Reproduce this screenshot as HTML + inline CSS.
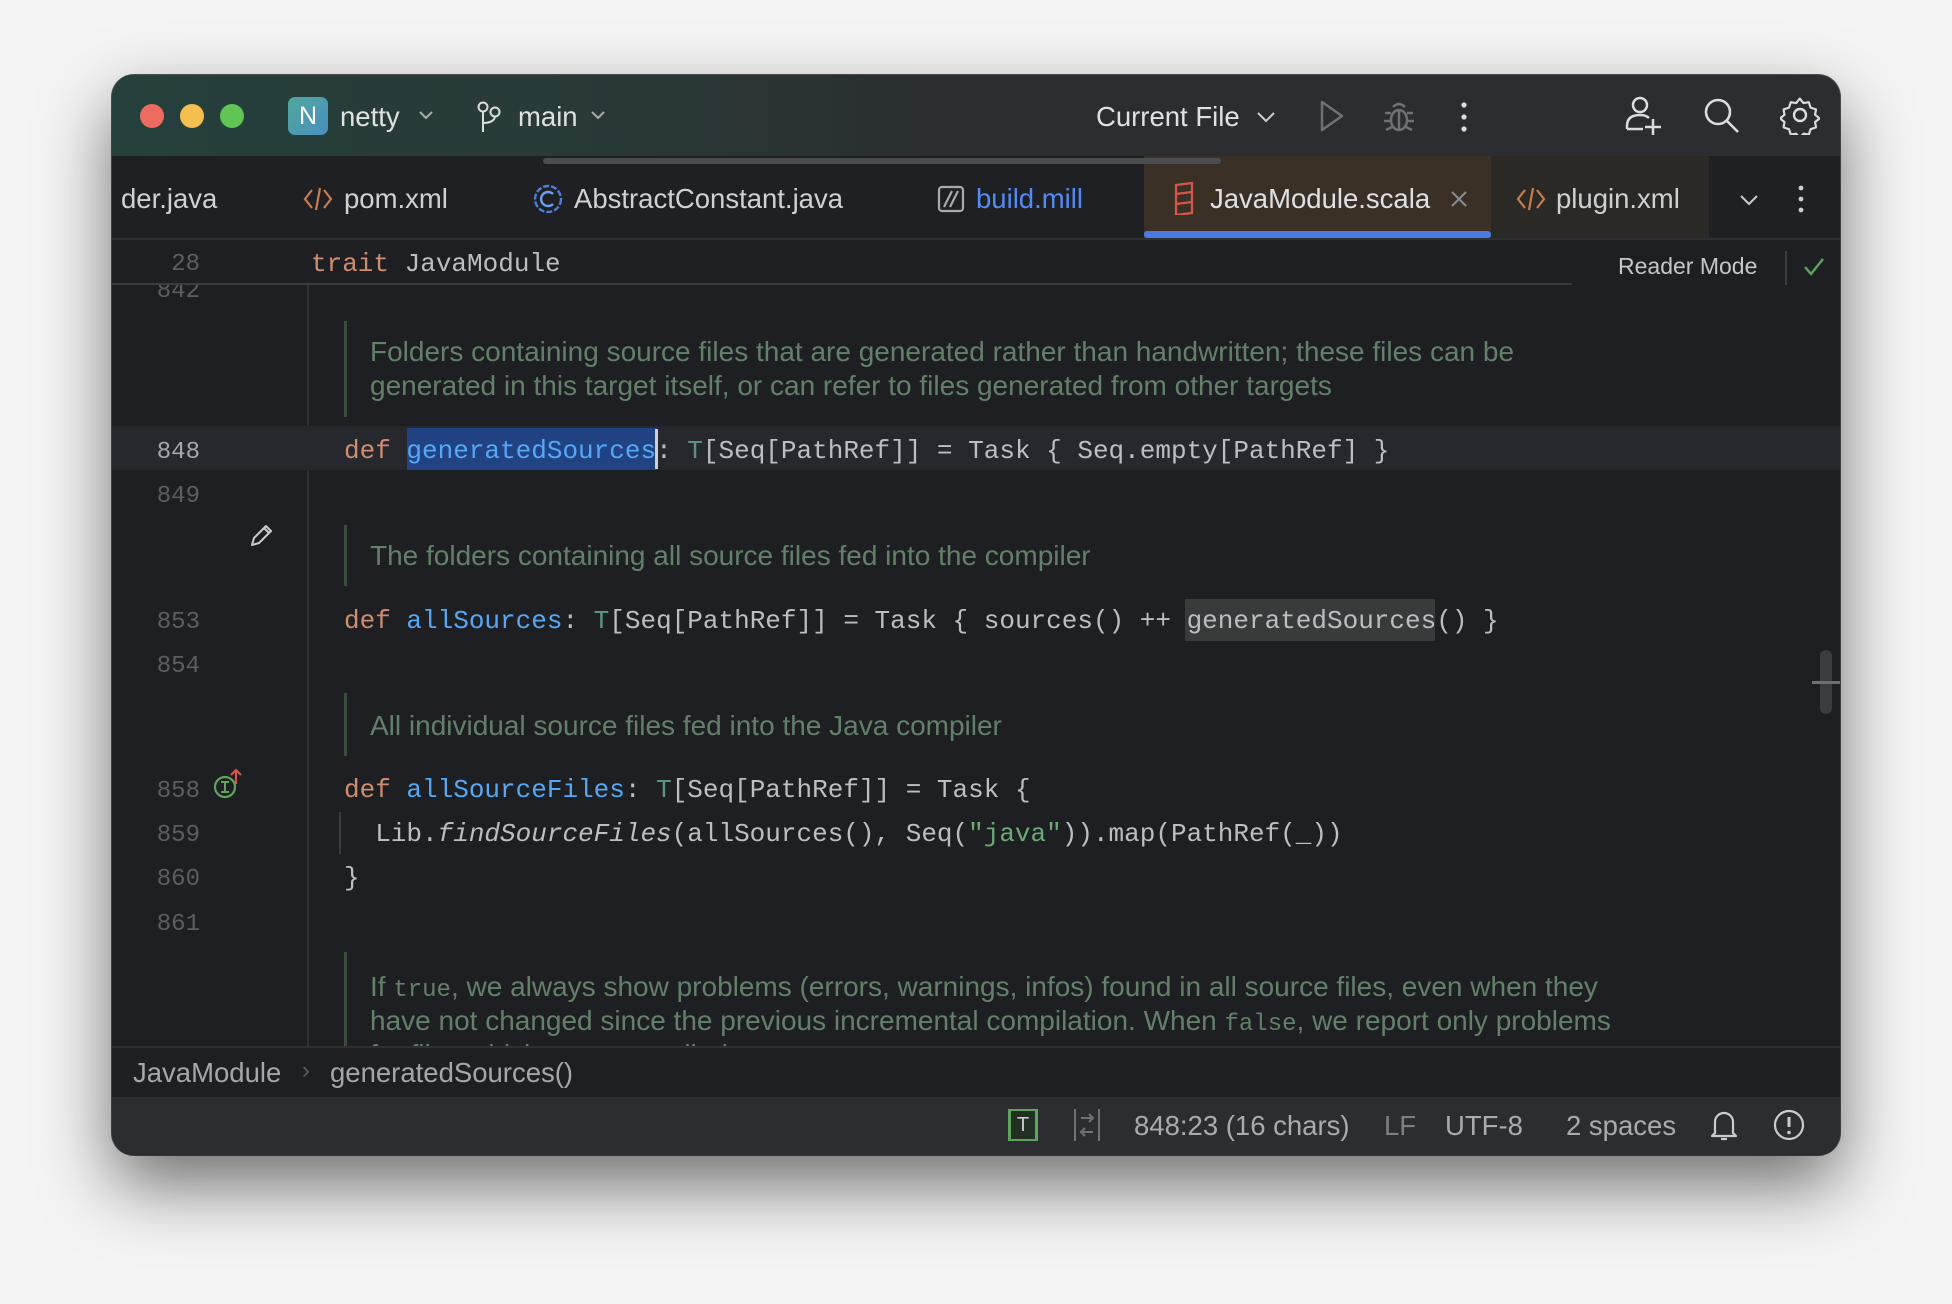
<!DOCTYPE html>
<html><head><meta charset="utf-8"><style>
*{margin:0;padding:0;box-sizing:border-box}
body{width:1952px;height:1304px;background:#f4f4f4;position:relative;overflow:hidden;font-family:"Liberation Sans",sans-serif}
.win{position:absolute;left:112px;top:75px;width:1728px;height:1080px;border-radius:22px;background:#1e1f22;overflow:hidden;box-shadow:0 30px 70px rgba(0,0,0,.55),0 0 0 1px #555;}
.a{position:absolute;white-space:pre}
.t{font-size:27.5px;color:#dfe1e5;margin-top:2px}
.mono{font-family:"Liberation Mono",monospace;font-size:26px;color:#bcbec4;margin-top:3px}
.ln{position:absolute;width:60px;left:28px;text-align:right;font-family:"Liberation Mono",monospace;font-size:24px;color:#5b5e64;margin-top:3px}
.cm{font-size:28px;color:#62806a;margin-top:2px}
.k{color:#cf8e6d}.f{color:#56a8f5}.ty{color:#5a9484}.s{color:#6aab73}
.cb{position:absolute;left:232px;width:3px;background:#3b4e3e}
.st{font-size:27.5px;color:#a8abb0;margin-top:1px}
svg{position:absolute}
</style></head><body>
<div class="win">
 <div class="a" style="left:0;top:0;width:1728px;height:81px;background:linear-gradient(90deg,#25403c 0%,#283a39 25%,#2b2d30 50%,#2b2d30 100%)"></div>
 <div class="a" style="left:28px;top:29px;width:24px;height:24px;border-radius:50%;background:#ed6a5e"></div>
 <div class="a" style="left:68px;top:29px;width:24px;height:24px;border-radius:50%;background:#f5bf4f"></div>
 <div class="a" style="left:108px;top:29px;width:24px;height:24px;border-radius:50%;background:#61c554"></div>
 <div class="a" style="left:176px;top:22px;width:40px;height:38px;border-radius:7px;background:linear-gradient(135deg,#4fa89b,#4a8fc0);color:#fff;font-size:25px;text-align:center;line-height:38px">N</div>
 <div class="a t" style="left:228px;top:24px">netty</div>
 <svg style="left:306px;top:34px" width="16" height="12"><path d="M2 3l6 6 6-6" stroke="#aaa" stroke-width="2" fill="none"/></svg>
 <svg style="left:364px;top:26px" width="28" height="34"><circle cx="7" cy="6" r="4.5" stroke="#ddd" stroke-width="2" fill="none"/><circle cx="19" cy="11" r="4.5" stroke="#ddd" stroke-width="2" fill="none"/><path d="M7 11v20M7 22c8 0 12-3 12-7" stroke="#ddd" stroke-width="2" fill="none"/></svg>
 <div class="a t" style="left:406px;top:24px">main</div>
 <svg style="left:478px;top:34px" width="16" height="12"><path d="M2 3l6 6 6-6" stroke="#aaa" stroke-width="2" fill="none"/></svg>
 <div class="a t" style="left:984px;top:24px">Current File</div>
 <svg style="left:1144px;top:35px" width="20" height="14"><path d="M2 3l8 8 8-8" stroke="#ccc" stroke-width="2" fill="none"/></svg>
 <svg style="left:1206px;top:24px" width="28" height="34"><path d="M4 3l20 14-20 14z" stroke="#6f7175" stroke-width="2.5" fill="none" stroke-linejoin="round"/></svg>
 <svg style="left:1270px;top:24px" width="34" height="36"><ellipse cx="17" cy="21" rx="8" ry="10" stroke="#6f7175" stroke-width="2.5" fill="none"/><path d="M11 8q6-6 12 0M3 14h6M25 14h6M2 22h7M25 22h7M4 31l6-3M30 31l-6-3M17 12v19" stroke="#6f7175" stroke-width="2.5" fill="none"/></svg>
 <svg style="left:1347px;top:24px" width="10" height="36"><circle cx="5" cy="6" r="2.6" fill="#ddd"/><circle cx="5" cy="18" r="2.6" fill="#ddd"/><circle cx="5" cy="30" r="2.6" fill="#ddd"/></svg>
 <svg style="left:1512px;top:20px" width="40" height="42"><circle cx="16" cy="10" r="7" stroke="#ddd" stroke-width="2.5" fill="none"/><path d="M3 34v-3q0-11 13-11q6 0 9 3M3 34h16M29 24v16M21 32h16" stroke="#ddd" stroke-width="2.5" fill="none"/></svg>
 <svg style="left:1590px;top:21px" width="40" height="40"><circle cx="16" cy="16" r="12" stroke="#ddd" stroke-width="2.6" fill="none"/><path d="M25 25l11 11" stroke="#ddd" stroke-width="2.6"/></svg>
 <svg style="left:1668px;top:20px" width="40" height="40"><path d="M20 2l4 5 6-1 2 6 6 2-1 6 5 4-5 4 1 6-6 2-2 6-6-1-4 5-4-5-6 1-2-6-6-2 1-6-5-4 5-4-1-6 6-2 2-6 6 1z" stroke="#ddd" stroke-width="2.4" fill="none" stroke-linejoin="round" transform="scale(.9) translate(2 2)"/><circle cx="20" cy="20" r="6" stroke="#ddd" stroke-width="2.4" fill="none"/></svg>

 <div class="a" style="left:0;top:81px;width:1728px;height:82px;background:#1f2023"></div>
 <div class="a" style="left:1032px;top:81px;width:347px;height:82px;background:#3b3025"></div>
 <div class="a" style="left:1379px;top:81px;width:218px;height:82px;background:#2b2925"></div>
 <div class="a" style="left:431px;top:83px;width:678px;height:6px;border-radius:3px;background:#4b4c4f"></div>
 <div class="a" style="left:1032px;top:156px;width:347px;height:7px;border-radius:3px;background:#4a7ae3"></div>
 <div class="a" style="left:0;top:163px;width:1728px;height:2px;background:#2d2f33"></div>
 <div class="a t" style="left:9px;top:106px;color:#cfd1d5">der.java</div>
 <svg style="left:190px;top:110px" width="32" height="28"><path d="M10 5L3 14l7 9M22 5l7 9-7 9M18 3l-4 22" stroke="#c77c4f" stroke-width="2.2" fill="none"/></svg>
 <div class="a t" style="left:232px;top:106px;color:#cfd1d5">pom.xml</div>
 <svg style="left:420px;top:108px" width="32" height="32"><circle cx="16" cy="16" r="13" stroke="#4c7fd8" stroke-width="2.4" fill="none" stroke-dasharray="6 2"/><path d="M21 11a7 7 0 1 0 0 10" stroke="#6f9ef0" stroke-width="2.4" fill="none"/></svg>
 <div class="a t" style="left:462px;top:106px;color:#cfd1d5">AbstractConstant.java</div>
 <svg style="left:825px;top:110px" width="28" height="28"><rect x="2" y="2" width="24" height="24" rx="3" stroke="#aaa" stroke-width="2.2" fill="none"/><path d="M7 22L15 6M13 22L21 6" stroke="#aaa" stroke-width="2.2"/></svg>
 <div class="a t" style="left:864px;top:106px;color:#548af7">build.mill</div>
 <svg style="left:1060px;top:106px" width="24" height="34"><path d="M4 4l16-2v30l-16 2zM4 13l16-2M4 23l16-2" stroke="#d5564f" stroke-width="2.3" fill="none"/></svg>
 <div class="a t" style="left:1098px;top:106px;color:#dfe1e5">JavaModule.scala</div>
 <svg style="left:1338px;top:115px" width="18" height="18"><path d="M2 2l14 14M16 2L2 16" stroke="#8a8c90" stroke-width="2"/></svg>
 <svg style="left:1403px;top:110px" width="32" height="28"><path d="M10 5L3 14l7 9M22 5l7 9-7 9M18 3l-4 22" stroke="#c77c4f" stroke-width="2.2" fill="none"/></svg>
 <div class="a t" style="left:1444px;top:106px;color:#cfd1d5">plugin.xml</div>
 <svg style="left:1627px;top:118px" width="20" height="14"><path d="M2 3l8 8 8-8" stroke="#ccc" stroke-width="2" fill="none"/></svg>
 <svg style="left:1684px;top:108px" width="10" height="32"><circle cx="5" cy="5" r="2.4" fill="#ccc"/><circle cx="5" cy="16" r="2.4" fill="#ccc"/><circle cx="5" cy="27" r="2.4" fill="#ccc"/></svg>

 <div class="a" style="left:195px;top:165px;width:2px;height:885px;background:#303236"></div>
 <div class="a" style="left:0;top:351px;width:1728px;height:44px;background:#26282d"></div>
 <div class="ln" style="top:200px">842</div>
 <div class="a" style="left:0;top:165px;width:1728px;height:45px;background:#1e1f22"></div>
 <div class="a" style="left:0;top:208px;width:1460px;height:2px;background:#393b40"></div>
 <div class="ln" style="top:173px">28</div>
 <div class="a mono" style="left:199px;top:171px"><span class="k">trait</span> JavaModule</div>
 <div class="a" style="left:1460px;top:165px;width:268px;height:46px;background:#1e1f22"></div>
 <div class="a" style="left:1506px;top:178px;font-size:23px;color:#c5c7cb">Reader Mode</div>
 <div class="a" style="left:1673px;top:176px;width:2px;height:34px;background:#3d3f43"></div>
 <svg style="left:1690px;top:180px" width="24" height="24"><path d="M3 12l6 7L21 4" stroke="#5fa35d" stroke-width="2.4" fill="none"/></svg>

 <div class="cb" style="top:246px;height:96px"></div>
 <div class="a cm" style="left:258px;top:259px">Folders containing source files that are generated rather than handwritten; these files can be</div>
 <div class="a cm" style="left:258px;top:293px">generated in this target itself, or can refer to files generated from other targets</div>

 <div class="ln" style="top:361px;color:#a4a7ad">848</div>
 <div class="a" style="left:295px;top:353px;width:250px;height:42px;background:#214283"></div>
 <div class="a" style="left:543px;top:354px;width:3px;height:40px;background:#ced0d6"></div>
 <div class="a mono" style="left:232px;top:358px"><span class="k">def</span> <span class="f">generatedSources</span>: <span class="ty">T</span>[Seq[PathRef]] = Task { Seq.empty[PathRef] }</div>

 <div class="ln" style="top:405px">849</div>
 <svg style="left:136px;top:446px" width="28" height="28"><path d="M4 24l2-7L18 5l5 5-12 12zM16 7l5 5" stroke="#ccc" stroke-width="2" fill="none" stroke-linejoin="round"/></svg>
 <div class="cb" style="top:450px;height:61px"></div>
 <div class="a cm" style="left:258px;top:463px">The folders containing all source files fed into the compiler</div>

 <div class="ln" style="top:531px">853</div>
 <div class="a" style="left:1073px;top:524px;width:250px;height:42px;background:#373b39"></div>
 <div class="a mono" style="left:232px;top:528px"><span class="k">def</span> <span class="f">allSources</span>: <span class="ty">T</span>[Seq[PathRef]] = Task { sources() ++ generatedSources() }</div>
 <div class="ln" style="top:575px">854</div>

 <div class="cb" style="top:618px;height:63px"></div>
 <div class="a cm" style="left:258px;top:633px">All individual source files fed into the Java compiler</div>

 <div class="ln" style="top:700px">858</div>
 <svg style="left:100px;top:692px" width="36" height="34"><circle cx="13" cy="20" r="10" stroke="#5fa35d" stroke-width="2.2" fill="none"/><path d="M9 15h8M9 25h8M13 15v10" stroke="#5fa35d" stroke-width="2"/><path d="M24 17V3M19 8l5-5 5 5" stroke="#d5564f" stroke-width="2.2" fill="none"/></svg>
 <div class="a mono" style="left:232px;top:697px"><span class="k">def</span> <span class="f">allSourceFiles</span>: <span class="ty">T</span>[Seq[PathRef]] = Task {</div>
 <div class="ln" style="top:744px">859</div>
 <div class="a" style="left:227px;top:737px;width:2px;height:42px;background:#393b40"></div>
 <div class="a mono" style="left:232px;top:741px">  Lib.<i>findSourceFiles</i>(allSources(), Seq(<span class="s">"java"</span>)).map(PathRef(_))</div>
 <div class="ln" style="top:788px">860</div>
 <div class="a mono" style="left:232px;top:785px">}</div>
 <div class="ln" style="top:833px">861</div>

 <div class="cb" style="top:877px;height:96px"></div>
 <div class="a cm" style="left:258px;top:894px">If <span style="font-family:'Liberation Mono',monospace;font-size:24px">true</span>, we always show problems (errors, warnings, infos) found in all source files, even when they</div>
 <div class="a cm" style="left:258px;top:928px">have not changed since the previous incremental compilation. When <span style="font-family:'Liberation Mono',monospace;font-size:24px">false</span>, we report only problems</div>
 <div class="a cm" style="left:258px;top:962px">for files which were compiled</div>

 <div class="a" style="left:1708px;top:575px;width:12px;height:64px;border-radius:6px;background:#3a3c40"></div>
 <div class="a" style="left:1700px;top:606px;width:28px;height:3px;background:#6d7074"></div>

 <div class="a" style="left:0;top:971px;width:1728px;height:51px;background:#1e1f22;border-top:2px solid #2d2f33"></div>
 <div class="a" style="left:21px;top:982px;font-size:27.5px;color:#a4a7ad">JavaModule</div>
 <div class="a" style="left:190px;top:982px;font-size:24px;color:#5b5e64">›</div>
 <div class="a" style="left:218px;top:982px;font-size:27.5px;color:#a4a7ad">generatedSources()</div>
 <div class="a" style="left:0;top:1022px;width:1728px;height:58px;background:#2b2d30"></div>
 <div class="a" style="left:896px;top:1034px;width:30px;height:32px;border:2px solid #5fa35d;background:#223024;color:#ccc;font-size:20px;text-align:center;line-height:28px;border-left-width:3px;border-right-width:3px">T</div>
 <svg style="left:960px;top:1032px" width="30" height="36"><path d="M3 2v32M27 2v32M9 11h12M17 7l4 4-4 4M21 25H9M13 21l-4 4 4 4" stroke="#6f7175" stroke-width="2" fill="none"/></svg>
 <div class="a st" style="left:1022px;top:1034px">848:23 (16 chars)</div>
 <div class="a st" style="left:1272px;top:1034px;color:#7c7f84">LF</div>
 <div class="a st" style="left:1333px;top:1034px">UTF-8</div>
 <div class="a st" style="left:1454px;top:1034px">2 spaces</div>
 <svg style="left:1597px;top:1031px" width="30" height="38"><path d="M6 27V16a9 9 0 0 1 18 0v11l3 3H3zM12 33h6" stroke="#ccc" stroke-width="2.2" fill="none" stroke-linejoin="round"/></svg>
 <svg style="left:1660px;top:1033px" width="34" height="34"><circle cx="17" cy="17" r="14" stroke="#ccc" stroke-width="2.2" fill="none"/><path d="M17 9v10" stroke="#ccc" stroke-width="3"/><circle cx="17" cy="24.5" r="1.8" fill="#ccc"/></svg>
</div>
</body></html>
